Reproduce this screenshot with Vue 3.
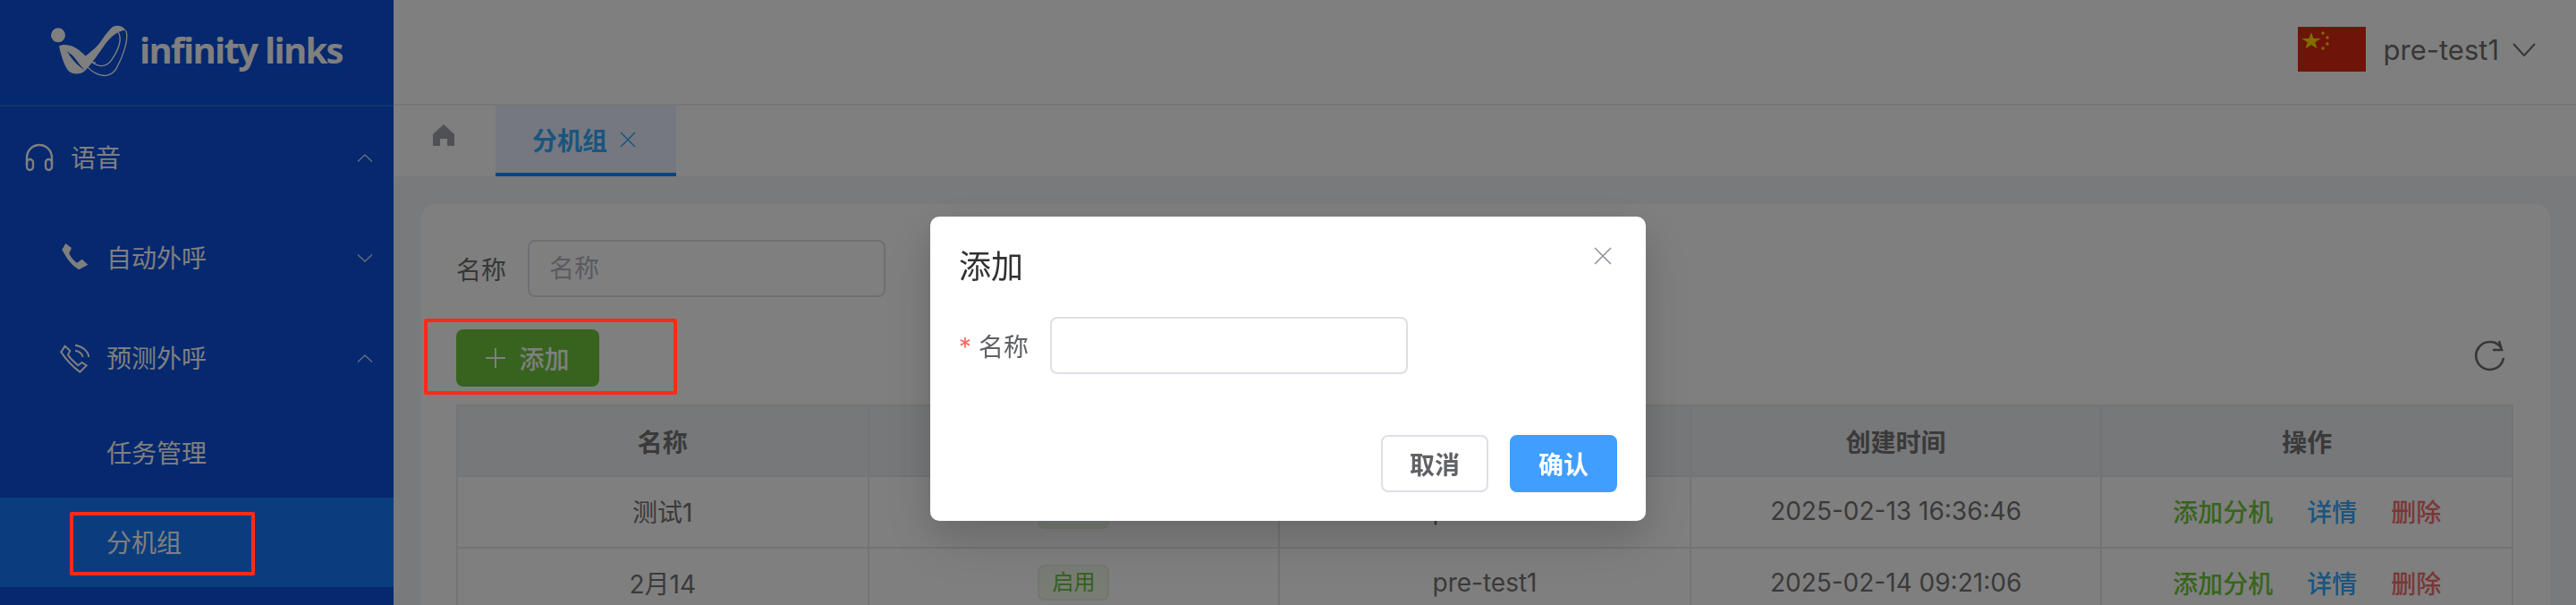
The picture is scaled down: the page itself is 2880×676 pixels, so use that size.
<template>
  <div class="page">
    <aside class="side">
      <div class="side__logo">
        <svg class="side__mark" viewBox="0 0 330 216">
          <circle cx="45" cy="58" r="24" fill="#fff" />
          <path fill="#fff" d="M48 95C65 85 95 92 115 108L140 130L112 150C100 130 85 118 75 112C85 130 100 150 120 165L135 178C120 190 95 192 80 178C65 160 55 125 48 95Z" />
          <path fill="#fff" d="M112 150L170 100C190 80 205 50 225 32C240 22 262 25 272 42C250 40 225 60 205 85C185 115 160 150 135 178Z" />
          <path fill="none" stroke="#fff" stroke-width="4" d="M272 42C284 70 262 130 240 170C225 195 195 200 170 185C150 175 140 160 130 150M245 45C262 70 245 110 225 140C205 170 175 165 150 140M80 115C100 120 130 150 170 150" />
        </svg>
        <span class="side__brand">infinity links</span>
      </div>
      <nav class="menu">
        <div class="menu__title menu__title--root">
          <svg class="menu__icon menu__icon--head" viewBox="0 0 32 32" fill="none" stroke="#fff" stroke-width="2.4">
            <path d="M2 24V16A14 14 0 0 1 30 16V24" />
            <rect x="2" y="18" width="7" height="12" rx="3.5" />
            <rect x="23" y="18" width="7" height="12" rx="3.5" />
          </svg>
          <span>语音</span>
          <svg class="menu__arrow" viewBox="0 0 18 9" fill="none" stroke="#fff" stroke-width="1.4"><path d="M1 8.5L9 1L17 8.5" /></svg>
        </div>
        <div class="menu__title">
          <svg class="menu__icon" viewBox="0 0 150 150"><path fill="#fff" d="M40 27L28 48C45 80 60 100 85 115L115 98L95 80L78 92C68 85 55 70 52 60L60 42Z" /></svg>
          <span>自动外呼</span>
          <svg class="menu__arrow" viewBox="0 0 18 9" fill="none" stroke="#fff" stroke-width="1.4"><path d="M1 .5L9 8L17 .5" /></svg>
        </div>
        <div class="menu__title">
          <svg class="menu__icon" viewBox="0 0 150 150" fill="none" stroke="#fff" stroke-width="6">
            <path d="M38 35L25 55C45 85 65 105 88 122L110 100L95 90L82 100C70 90 55 75 48 65L55 50Z" />
            <path d="M72 32C95 35 115 50 118 72M72 50C85 52 95 60 98 72" />
          </svg>
          <span>预测外呼</span>
          <svg class="menu__arrow" viewBox="0 0 18 9" fill="none" stroke="#fff" stroke-width="1.4"><path d="M1 8.5L9 1L17 8.5" /></svg>
        </div>
        <div class="menu__sub">
          <div class="menu__item">任务管理</div>
          <div class="menu__item menu__item--active">分机组</div>
        </div>
      </nav>
    </aside>

    <main class="main">
      <header class="top">
        <svg class="top__flag" viewBox="0 0 76 50">
          <rect width="76" height="50" fill="#de2910" />
          <polygon fill="#ffde00" points="15,8 17.6,15.6 25.6,15.6 19.2,20.4 21.5,28 15,23.4 8.5,28 10.8,20.4 4.4,15.6 12.4,15.6" transform="translate(0 -1) scale(1 .9)" />
          <circle cx="28" cy="7" r="1.7" fill="#ffde00" />
          <circle cx="33" cy="12" r="1.7" fill="#ffde00" />
          <circle cx="33" cy="19" r="1.7" fill="#ffde00" />
          <circle cx="28" cy="24" r="1.7" fill="#ffde00" />
        </svg>
        <span class="top__user">pre-test1</span>
        <svg class="top__arrow" viewBox="0 0 26 15" fill="none" stroke="#6c6c6c" stroke-width="2"><path d="M1 1L13 14L25 1" /></svg>
      </header>

      <div class="tabs">
        <svg class="tabs__home" viewBox="0 0 24 24"><path fill="#a0a2aa" d="M12 0L24 11V24H16V16H8V24H0V11Z" /></svg>
        <div class="tabs__tab">
          <span>分机组</span>
          <svg class="tabs__close" viewBox="0 0 18 18" fill="none" stroke="currentColor" stroke-width="1.6"><path d="M1 1L17 17M17 1L1 17" /></svg>
        </div>
      </div>

      <section class="content">
        <div class="card">
          <div class="search">
            <label class="search__label">名称</label>
            <input class="search__input" placeholder="名称" />
          </div>
          <div class="bar">
            <button class="add">
              <svg class="add__plus" viewBox="0 0 22 22" fill="none" stroke="#fff" stroke-width="2"><path d="M11 0V22M0 11H22" /></svg>
              添加
            </button>
            <svg class="bar__refresh" viewBox="0 0 50 50" fill="none" stroke="#6c6c6c" stroke-width="2.6">
              <path d="M39 14A15.5 15.5 0 1 0 42 26" />
              <path d="M30 17H40L37 7" />
            </svg>
          </div>
          <table class="grid">
            <thead>
              <tr>
                <th v-for="h in headers" :key="h">{{ h }}</th>
              </tr>
            </thead>
            <tbody>
              <tr v-for="row in rows" :key="row.name">
                <td>{{ row.name }}</td>
                <td><span class="tag">启用</span></td>
                <td>{{ row.user }}</td>
                <td>{{ row.time }}</td>
                <td>
                  <a class="link link--green">添加分机</a>
                  <a class="link link--blue">详情</a>
                  <a class="link link--red">删除</a>
                </td>
              </tr>
            </tbody>
          </table>
        </div>
      </section>
    </main>

    <div class="mask">
      <div class="dialog">
        <div class="dialog__title">添加</div>
        <svg class="dialog__close" viewBox="0 0 20 20" fill="none" stroke="#909399" stroke-width="1.6"><path d="M1 1L19 19M19 1L1 19" /></svg>
        <div class="dialog__row">
          <label class="dialog__label"><i class="dialog__star">*</i>名称</label>
          <input class="dialog__input" />
        </div>
        <div class="dialog__foot">
          <button class="btn">取消</button>
          <button class="btn btn--primary">确认</button>
        </div>
      </div>
    </div>

    <div class="mark mark--menu"></div>
    <div class="mark mark--add"></div>
  </div>
</template>

<script setup>
const headers = ['名称', '状态', '创建人', '创建时间', '操作'];
const rows = [
  { name: '测试1', user: 'pre-test1', time: '2025-02-13 16:36:46' },
  { name: '2月14', user: 'pre-test1', time: '2025-02-14 09:21:06' }
];
</script>

<style>
body {
  margin: 0;
}
</style>

<style scoped>
.page {
  position: relative;
  display: flex;
  width: 2880px;
  height: 676px;
  overflow: hidden;
  background: #fff;
  font-family: Inter, "Noto Sans CJK SC", sans-serif;
  font-size: 28px;
  color: #6e6e6e;
}

.side {
  flex: none;
  width: 440px;
  background: #0a50dc;
  color: #fff;
}

.side__logo {
  display: flex;
  align-items: center;
  height: 119px;
  padding-left: 50px;
  padding-bottom: 6px;
  box-sizing: border-box;
  border-bottom: 2px solid #2a62d6;
}

.side__mark {
  width: 110px;
  height: 72px;
}

.side__brand {
  margin-left: -4px;
  font-family: "Open Sans", sans-serif;
  font-size: 40px;
  font-weight: 700;
  letter-spacing: -1.7px;
}

.menu {
  padding-top: 7px;
}

.menu__title {
  display: flex;
  align-items: center;
  height: 100px;
  margin-bottom: 12px;
  padding-left: 68px;
  padding-right: 23px;
}

.menu__title--root {
  padding-left: 28px;
}

.menu__title span {
  flex: 1;
  padding-bottom: 2px;
}

.menu__icon {
  width: 50px;
  height: 50px;
  margin-left: -8px;
  margin-right: 9px;
  flex: none;
}

.menu__icon--head {
  width: 32px;
  height: 32px;
  margin-left: 0;
  margin-right: 19px;
}

.menu__arrow {
  width: 18px;
  height: 9px;
  opacity: .8;
}

.menu__sub {
  margin-top: -6px;
}

.menu__item {
  display: flex;
  align-items: center;
  box-sizing: border-box;
  height: 100px;
  padding-left: 119px;
  padding-bottom: 2px;
}

.menu__item--active {
  background: #167afc;
}

.main {
  flex: 1;
  display: flex;
  flex-direction: column;
  min-width: 0;
  height: 676px;
}

.top {
  flex: none;
  display: flex;
  align-items: center;
  justify-content: flex-end;
  height: 118px;
  padding-right: 45px;
  padding-bottom: 6px;
  box-sizing: border-box;
  border-bottom: 2px solid #ececf0;
}

.top__flag {
  width: 76px;
  height: 50px;
}

.top__user {
  margin-left: 20px;
  font-size: 31px;
}

.top__arrow {
  width: 26px;
  height: 15px;
  margin-left: 15px;
}

.tabs {
  flex: none;
  display: flex;
  align-items: flex-start;
  height: 79px;
  padding-left: 44px;
}

.tabs__home {
  width: 24px;
  height: 24px;
  margin-top: 21px;
  margin-right: 46px;
}

.tabs__tab {
  display: flex;
  align-items: center;
  gap: 14px;
  box-sizing: border-box;
  width: 202px;
  height: 79px;
  padding-left: 41px;
  background: #ecf0fe;
  border-bottom: 4px solid #1488ff;
  color: #32aaff;
  font-weight: 700;
}

.tabs__close {
  width: 18px;
  height: 18px;
}

.content {
  flex: 1;
  min-height: 0;
  overflow: hidden;
  padding: 31px 29px 0 31px;
  background: #f2f4f8;
}

.card {
  box-sizing: border-box;
  height: 600px;
  padding: 40px 41px 0 39px;
  background: #fff;
  border-radius: 16px;
}

.search {
  display: flex;
  align-items: center;
}

.search__label {
  width: 56px;
  margin-right: 24px;
  color: #6e6e6e;
}

.search__input {
  box-sizing: border-box;
  width: 400px;
  height: 64px;
  padding: 0 22px;
  border: 2px solid #dcdfe6;
  border-radius: 8px;
  outline: none;
  font: inherit;
  background: #fff;
}

.search__input::placeholder {
  color: #b4b6be;
}

.bar {
  display: flex;
  align-items: center;
  justify-content: space-between;
  margin-top: 36px;
  margin-bottom: 20px;
}

.add {
  display: flex;
  align-items: center;
  justify-content: center;
  width: 160px;
  height: 64px;
  padding: 0;
  border: none;
  border-radius: 8px;
  background: #70c63c;
  color: #fff;
  font: inherit;
  font-weight: 500;
}

.add__plus {
  width: 22px;
  height: 22px;
  margin-right: 15px;
}

.bar__refresh {
  width: 50px;
  height: 50px;
  margin-right: 3px;
  margin-top: -2px;
}

.grid {
  width: 2300px;
  border-collapse: collapse;
  table-layout: fixed;
}

.grid th,
.grid td {
  padding: 0;
  border: 2px solid #e6e8f0;
  text-align: center;
  font-weight: 400;
  color: #747474;
}

.grid th {
  height: 77px;
  background: #eef0f4;
  font-weight: 700;
}

.grid td {
  height: 76px;
  padding-bottom: 2px;
}

.tag {
  display: inline-block;
  box-sizing: border-box;
  width: 80px;
  height: 40px;
  line-height: 36px;
  border: 2px solid #e1f3d8;
  border-radius: 8px;
  background: #f0f9eb;
  color: #67c23a;
  font-size: 24px;
  vertical-align: middle;
}

.link {
  margin: 0 19px;
  font-weight: 500;
}

.link--green {
  color: #6fc93a;
}

.link--blue {
  color: #32aaff;
}

.link--red {
  color: #f56c6c;
}

.mask {
  position: fixed;
  inset: 0;
  display: flex;
  justify-content: center;
  align-items: flex-start;
  background: rgba(0, 0, 0, .5);
}

.dialog {
  position: relative;
  box-sizing: border-box;
  width: 800px;
  height: 340px;
  margin-top: 242px;
  padding: 32px;
  border-radius: 10px;
  background: #fff;
  box-shadow: 0 24px 64px 8px rgba(0, 0, 0, .08), 0 16px 40px rgba(0, 0, 0, .12);
}

.dialog__title {
  height: 48px;
  line-height: 48px;
  font-size: 36px;
  color: #303133;
}

.dialog__close {
  position: absolute;
  top: 34px;
  right: 38px;
  width: 20px;
  height: 20px;
}

.dialog__row {
  display: flex;
  align-items: center;
  margin-top: 32px;
}

.dialog__label {
  width: 102px;
  color: #606266;
}

.dialog__star {
  margin-right: 8px;
  color: #f56c6c;
  font-style: normal;
}

.dialog__input {
  box-sizing: border-box;
  width: 400px;
  height: 64px;
  border: 2px solid #dcdfe6;
  border-radius: 8px;
  outline: none;
  background: #fff;
}

.dialog__foot {
  display: flex;
  justify-content: flex-end;
  gap: 24px;
  margin-top: 68px;
}

.btn {
  box-sizing: border-box;
  width: 120px;
  height: 64px;
  padding: 0;
  border: 2px solid #dcdfe6;
  border-radius: 8px;
  background: #fff;
  color: #606266;
  font: inherit;
  font-weight: 700;
}

.btn--primary {
  border-color: #409eff;
  background: #409eff;
  color: #fff;
}

.mark {
  position: absolute;
  box-sizing: border-box;
  border: 4px solid #ff2a1a;
  border-radius: 2px;
}

.mark--menu {
  left: 78px;
  top: 572px;
  width: 207px;
  height: 71px;
}

.mark--add {
  left: 474px;
  top: 356px;
  width: 283px;
  height: 85px;
}
</style>
